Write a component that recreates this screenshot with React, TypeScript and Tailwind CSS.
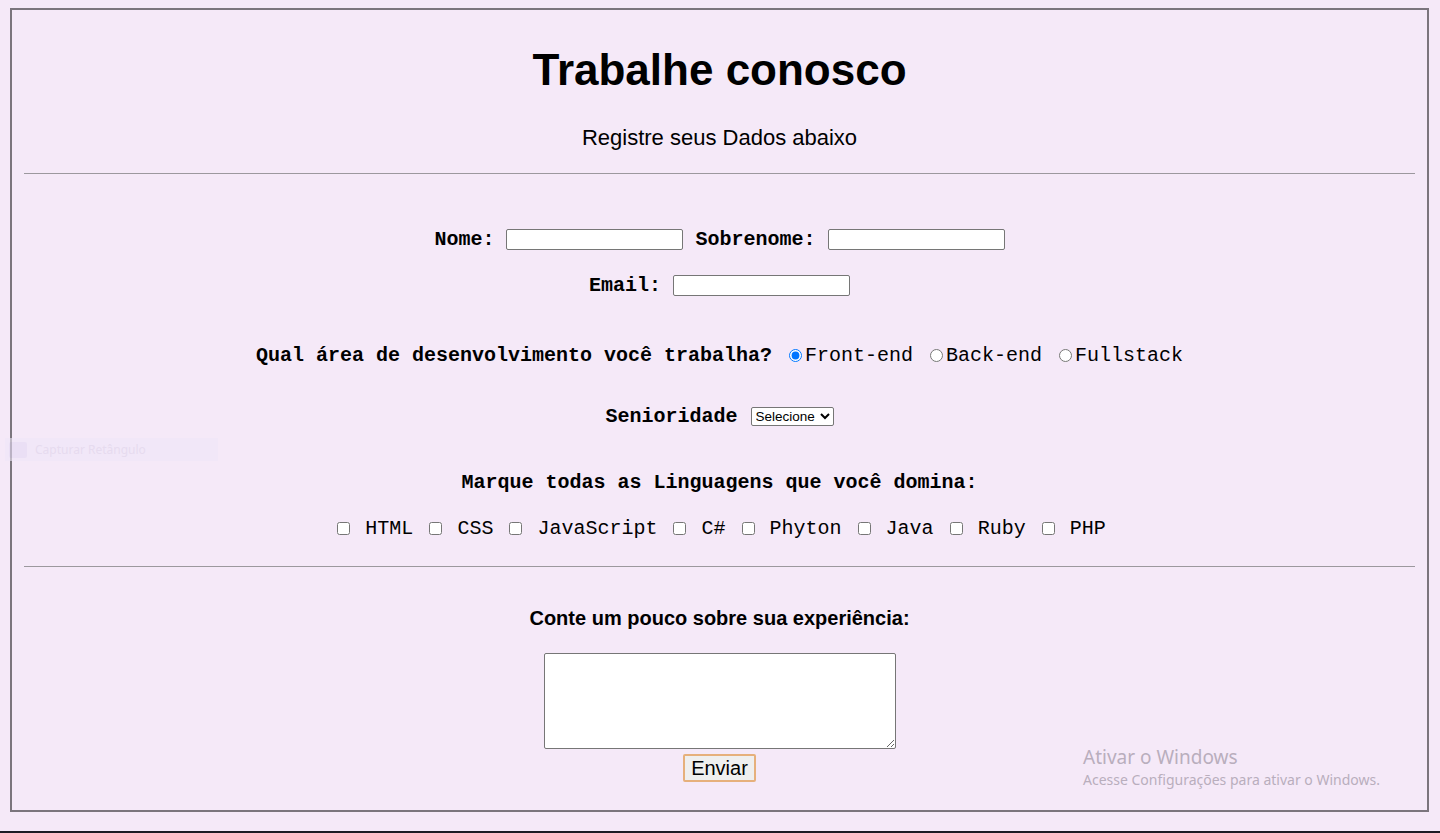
import React from 'react';

const langs = ['HTML', 'CSS', 'JavaScript', 'C#', 'Phyton', 'Java', 'Ruby', 'PHP'];

function TextField() {
  return (
    <input
      type="text"
      className="w-[177px] h-[21px] bg-white border border-[#767676] rounded-[2px] px-[2px] text-[13px] font-['Liberation_Sans',Arial,sans-serif]"
    />
  );
}

export default function App() {
  return (
    <div className="relative h-[833px] overflow-hidden flex flex-col bg-[#f5e9f8] text-black font-['Liberation_Sans',Arial,sans-serif]">
      <div className="pt-[8px] pl-[10px] pr-[11px]">
        <div className="h-[804px] border-2 border-[#7b757d] flex flex-col">
          <h1 className="mt-[36px] leading-[48px] text-[44px] font-bold text-center">Trabalhe conosco</h1>
          <p className="mt-[31px] leading-[25px] text-[22px] text-center">Registre seus Dados abaixo</p>
          <div className="mt-[23px] mx-[12px] border-t border-[#9c989e]" />

          <form className="flex flex-col font-['Liberation_Mono','Courier_New',monospace] text-[20px]">
            <div className="mt-[54px] h-[23px] flex items-center justify-center gap-[12px]">
              <label className="font-bold">Nome:</label>
              <TextField />
              <label className="font-bold">Sobrenome:</label>
              <TextField />
            </div>
            <div className="mt-[23px] h-[23px] flex items-center justify-center gap-[12px]">
              <label className="font-bold">Email:</label>
              <TextField />
            </div>

            <div className="mt-[47px] h-[23px] leading-[23px] text-center whitespace-nowrap">
              <span className="font-bold">Qual área de desenvolvimento você trabalha?</span>{' '}
              <input type="radio" name="area" defaultChecked className="w-[13px] h-[13px] ml-[5px] mr-[3px] align-[-1px]" />
              Front-end{' '}
              <input type="radio" name="area" className="w-[13px] h-[13px] ml-[5px] mr-[3px] align-[-1px]" />
              Back-end{' '}
              <input type="radio" name="area" className="w-[13px] h-[13px] ml-[5px] mr-[3px] align-[-1px]" />
              Fullstack
            </div>

            <div className="mt-[38px] h-[23px] flex items-center justify-center gap-[13px]">
              <label className="font-bold">Senioridade</label>
              <select className="h-[19px] w-[83px] bg-white border border-[#767676] rounded-[2px] text-[13.5px] font-['Liberation_Sans',Arial,sans-serif]">
                <option>Selecione</option>
                <option>Júnior</option>
                <option>Pleno</option>
                <option>Sênior</option>
              </select>
            </div>

            <div className="mt-[43px] h-[23px] leading-[23px] text-center font-bold">
              Marque todas as Linguagens que você domina:
            </div>

            <div className="mt-[23px] h-[23px] leading-[23px] text-center whitespace-nowrap">
              {langs.map((l) => (
                <React.Fragment key={l}>
                  <input type="checkbox" className="w-[13px] h-[13px] ml-[4px] mr-[3px] align-[-1px]" /> {l}{' '}
                </React.Fragment>
              ))}
            </div>
          </form>

          <div className="mt-[26px] mx-[12px] border-t border-[#9c989e]" />

          <div className="flex flex-col items-center">
            <label className="mt-[40px] leading-[23px] text-[20px] font-bold">
              Conte um pouco sobre sua experiência:
            </label>
            <textarea className="mt-[23px] w-[352px] h-[96px] bg-white border border-[#767676] rounded-[2px]" />
            <button
              type="button"
              className="mt-[5px] h-[28px] px-[6px] text-[20px] leading-[22px] bg-[#efefef] border-2 border-[#e6b07c] rounded-[2px]"
            >
              Enviar
            </button>
          </div>
        </div>
      </div>
      <div className="flex-1" />
      <div className="h-[2px] bg-[#1e1b24]" />

      {/* screen overlays captured with the page */}
      <div className="absolute left-[5px] top-[438px] w-[213px] h-[23px] flex items-center gap-[8px] bg-[#efe7f8] opacity-60">
        <div className="ml-[4px] w-[18px] h-[16px] rounded-[2px] bg-[#e4daf4]" />
        <span className="text-[12px] text-[#ddd2ea] font-['Noto_Sans',sans-serif]">Capturar Retângulo</span>
      </div>
      <div className="absolute left-[1083px] top-[744px] text-[#b9aebd] font-['Noto_Sans','Open_Sans',sans-serif]">
        <div className="text-[19px] leading-[26px]">Ativar o Windows</div>
        <div className="text-[14px] leading-[20px]">Acesse Configurações para ativar o Windows.</div>
      </div>
    </div>
  );
}
